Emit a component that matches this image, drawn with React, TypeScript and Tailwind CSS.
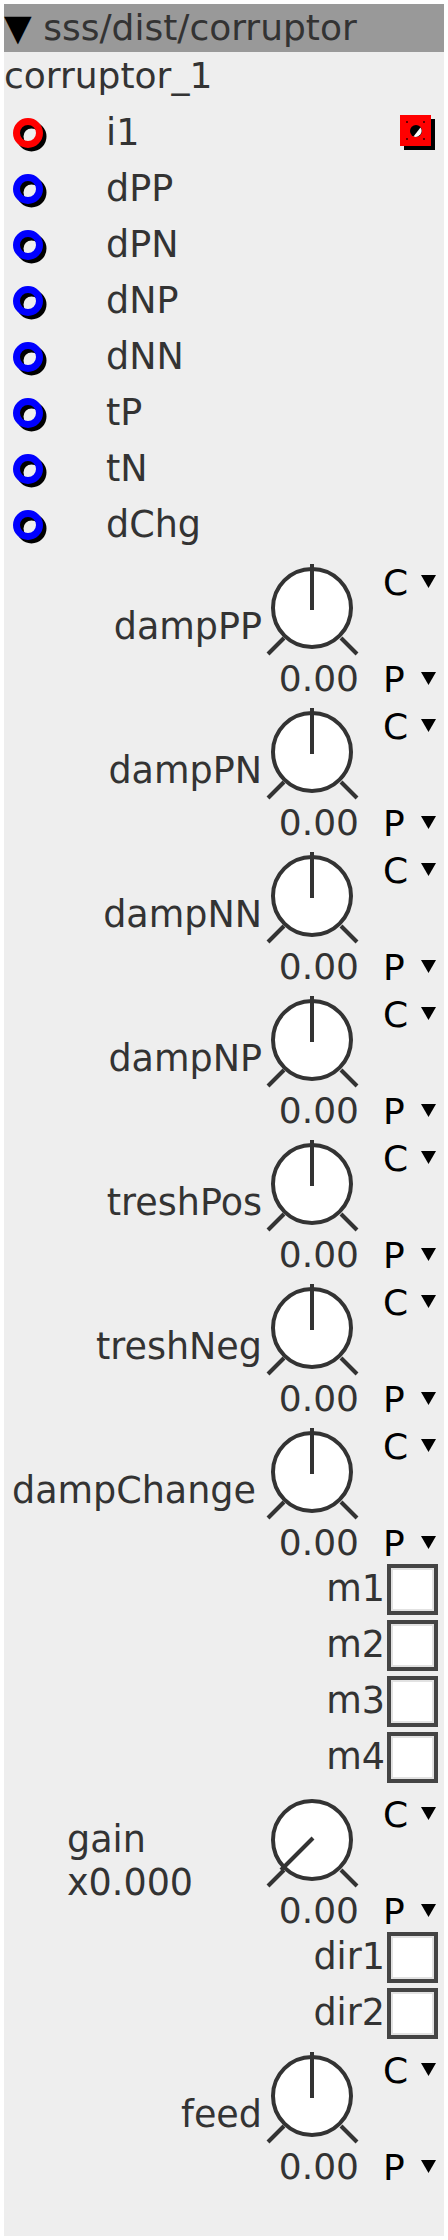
import React from "react";

function Port({ color }: { color: string }) {
  return (
    <svg width="42" height="42" viewBox="0 0 42 42" className="shrink-0">
      <circle cx="23.5" cy="23.5" r="11.5" fill="none" stroke="#000" strokeWidth="7" />
      <circle cx="20" cy="20" r="11.5" fill="none" stroke={color} strokeWidth="7" />
    </svg>
  );
}

function OutPort() {
  return (
    <svg width="36" height="36" viewBox="0 0 36 36" className="shrink-0">
      <rect x="4" y="4" width="31" height="31" fill="#000" />
      <rect x="0" y="0" width="31" height="31" fill="#ff0000" />
      <circle cx="16" cy="16" r="6" fill="#000" />
      <path d="M11.5 19.5 A6 6 0 0 1 18.5 10.5 Z" fill="#fff" transform="rotate(180 16 16)" />
      <rect x="6" y="6" width="2" height="2" fill="#600" />
      <rect x="23" y="6" width="2" height="2" fill="#600" />
      <rect x="6" y="23" width="2" height="2" fill="#600" />
      <rect x="23" y="23" width="2" height="2" fill="#600" />
    </svg>
  );
}

function PortRow({ label, color, out }: { label: string; color: string; out?: boolean }) {
  return (
    <div className="flex h-[56px] items-center">
      <div className="ml-[4px] mt-[1px]">
        <Port color={color} />
      </div>
      <span className="ml-[56px] text-[36.5px] text-[#333]">{label}</span>
      {out && (
        <div className="ml-auto mr-[8px] flex">
          <OutPort />
        </div>
      )}
    </div>
  );
}

function Knob({ min }: { min?: boolean }) {
  return (
    <svg width="94" height="108" viewBox="0 0 94 108" className="block shrink-0">
      <line x1="2" y1="101" x2="18" y2="85" stroke="#333" strokeWidth="4" />
      <line x1="75" y1="85" x2="91" y2="101" stroke="#333" strokeWidth="4" />
      <circle cx="46" cy="55" r="39" fill="#fff" stroke="#333" strokeWidth="4" />
      {min ? (
        <line x1="47" y1="53" x2="15" y2="85" stroke="#333" strokeWidth="4" />
      ) : (
        <line x1="46" y1="11" x2="46" y2="57" stroke="#333" strokeWidth="4" />
      )}
    </svg>
  );
}

function Sel({ letter }: { letter: string }) {
  return (
    <div className="flex h-[36px] justify-between text-[36px] leading-[36px] text-black">
      <span>{letter}</span>
      <svg width="15" height="13" viewBox="0 0 15 13" className="mt-[10px] shrink-0">
        <polygon points="0,0 15,0 7.5,13" fill="#000" />
      </svg>
    </div>
  );
}

function KnobBlock({
  label,
  min,
  gain,
  wide,
}: {
  label?: string;
  min?: boolean;
  gain?: boolean;
  wide?: boolean;
}) {
  return (
    <div className="flex h-[144px]">
      {gain ? (
        <div className="w-[259px] shrink-0 pl-[63px] pt-[33px] text-[36.5px] leading-[43px] text-[#333]">
          <div>gain</div>
          <div>x0.000</div>
        </div>
      ) : (
        <div
          className={
            wide
              ? "w-[259px] shrink-0 whitespace-nowrap pr-[7px] pt-[54px] text-right text-[36.5px] leading-[40px] text-[#333]"
              : "w-[259px] shrink-0 whitespace-nowrap pr-[1px] pt-[54px] text-right text-[36.5px] leading-[40px] text-[#333]"
          }
        >
          {label}
        </div>
      )}
      <div className="ml-[3px] flex w-[94px] shrink-0 flex-col">
        <Knob min={min} />
        <div className="pr-[1px] text-right text-[36px] leading-[36px] text-[#333]">0.00</div>
      </div>
      <div className="ml-[23px] flex w-[53px] shrink-0 flex-col pt-[12px]">
        <Sel letter="C" />
        <div className="mt-[61px]">
          <Sel letter="P" />
        </div>
      </div>
    </div>
  );
}

function CheckRow({ label }: { label: string }) {
  return (
    <div className="flex h-[56px] items-center justify-end pr-[6px]">
      <span className="mr-[2px] text-[36.5px] text-[#333]">{label}</span>
      <div className="h-[51px] w-[51px] shrink-0 border-[4px] border-[#444] bg-white shadow-[inset_0_0_0_2px_#e2e2e2]" />
    </div>
  );
}

export default function App() {
  const ports = ["dPP", "dPN", "dNP", "dNN", "tP", "tN", "dChg"];
  const knobs = ["dampPP", "dampPN", "dampNN", "dampNP", "treshPos", "treshNeg"];
  return (
    <div className="w-[448px] bg-white p-[4px] font-['DejaVu_Sans',sans-serif]">
      <div className="flex h-[2232px] w-[440px] flex-col bg-[#eeeeee]">
        <div className="flex h-[48px] shrink-0 items-center whitespace-nowrap bg-[#999999] text-[36px] leading-[42px] text-[#333]">
          <span className="text-black">▼</span>
          <span>&nbsp;sss/dist/corruptor</span>
        </div>
        <div className="h-[53px] shrink-0 pt-[3px] text-[36px] leading-[41px] text-[#333]">corruptor_1</div>
        <PortRow label="i1" color="#ff0000" out />
        {ports.map((p) => (
          <PortRow key={p} label={p} color="#0000ff" />
        ))}
        {knobs.map((k) => (
          <KnobBlock key={k} label={k} />
        ))}
        <KnobBlock label="dampChange" wide />
        {["m1", "m2", "m3", "m4"].map((m) => (
          <CheckRow key={m} label={m} />
        ))}
        <KnobBlock gain min />
        <CheckRow label="dir1" />
        <CheckRow label="dir2" />
        <KnobBlock label="feed" />
      </div>
    </div>
  );
}
